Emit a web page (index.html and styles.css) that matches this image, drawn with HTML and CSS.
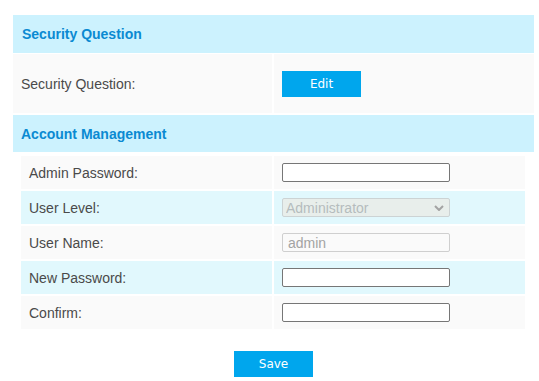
FILE: index.html
```html
<!DOCTYPE html>
<html lang="en">

<head>
	<title>Account</title>
	<meta charset="UTF-8">
	<meta name="viewport" content="width=device-width, initial-scale=1.0">
	<link rel="stylesheet" href="styles.css">
</head>

<body>
	<div class="panel">
		<div class="section-head">Security Question</div>
		<div class="sec-row">
			<div class="cell">Security Question:</div>
			<div class="cell">
				<button type="button" class="btn">Edit</button>
			</div>
		</div>

		<div class="section-head section-head-2">Account Management</div>
		<form class="grid">
			<div class="cell">Admin Password:</div>
			<div class="cell">
				<input type="password" class="field">
			</div>
			<div class="cell alt">User Level:</div>
			<div class="cell alt">
				<div class="select-wrap">
					<select class="field field-off" disabled>
						<option>Administrator</option>
					</select>
					<svg class="chevron" width="10" height="6" viewBox="0 0 10 6">
						<path d="M1 1 L5 5 L9 1" fill="none" stroke="#a3a3a3" stroke-width="2" />
					</svg>
				</div>
			</div>
			<div class="cell">User Name:</div>
			<div class="cell">
				<input type="text" class="field field-off" value="admin" disabled>
			</div>
			<div class="cell alt">New Password:</div>
			<div class="cell alt">
				<input type="password" class="field">
			</div>
			<div class="cell">Confirm:</div>
			<div class="cell">
				<input type="password" class="field">
			</div>
		</form>

		<div class="actions">
			<button type="button" class="btn">Save</button>
		</div>
	</div>
</body>

</html>
```

FILE: styles.css
```css
* {
	box-sizing: border-box;
}

body {
	margin: 0;
	font-family: "Liberation Sans", Arial, sans-serif;
	font-size: 14px;
	color: #4a4a4a;
	background: #fff;
}

.panel {
	width: 521px;
	margin: 15px 0 0 13px;
}

.section-head {
	height: 38px;
	display: flex;
	align-items: center;
	padding-left: 9px;
	background-color: #ccf2fe;
	color: #0a8ad2;
	font-weight: bold;
}

.section-head-2 {
	height: 37px;
	padding-left: 8px;
}

.sec-row {
	display: grid;
	grid-template-columns: 259px 260px;
	gap: 2px;
	height: 59px;
	margin: 1px 0 2px;
}

.cell {
	display: flex;
	align-items: center;
	padding-left: 8px;
	background-color: #fafafa;
}

.cell.alt {
	background-color: #e1f8fd;
}

.grid {
	display: grid;
	grid-template-columns: 251px 251px;
	grid-auto-rows: 33px;
	gap: 2px;
	margin: 4px 8px 0;
}

.btn {
	width: 79px;
	height: 26px;
	border: none;
	background-color: #00a6ed;
	color: #fff;
	font-family: "DejaVu Sans", Verdana, sans-serif;
	font-size: 12px;
	cursor: pointer;
}

.field {
	width: 168px;
	height: 19px;
	margin: 0;
	padding: 0 4px;
	border: 1px solid #767676;
	border-radius: 2px;
	background: #fff;
	font-family: "Liberation Sans", Arial, sans-serif;
	font-size: 14px;
	color: #444;
}

.field-off {
	border-color: #cfcfcf;
	color: #a3a3a3;
	background-color: #fafafa;
	padding-left: 5px;
}

select.field-off {
	appearance: none;
	background-color: #ebebe4;
	border-color: #c4c4c4;
	padding-left: 3px;
}

.select-wrap {
	position: relative;
	display: flex;
}

.chevron {
	position: absolute;
	right: 6px;
	top: 7px;
}

.actions {
	display: flex;
	justify-content: center;
	margin-top: 22px;
}
```
